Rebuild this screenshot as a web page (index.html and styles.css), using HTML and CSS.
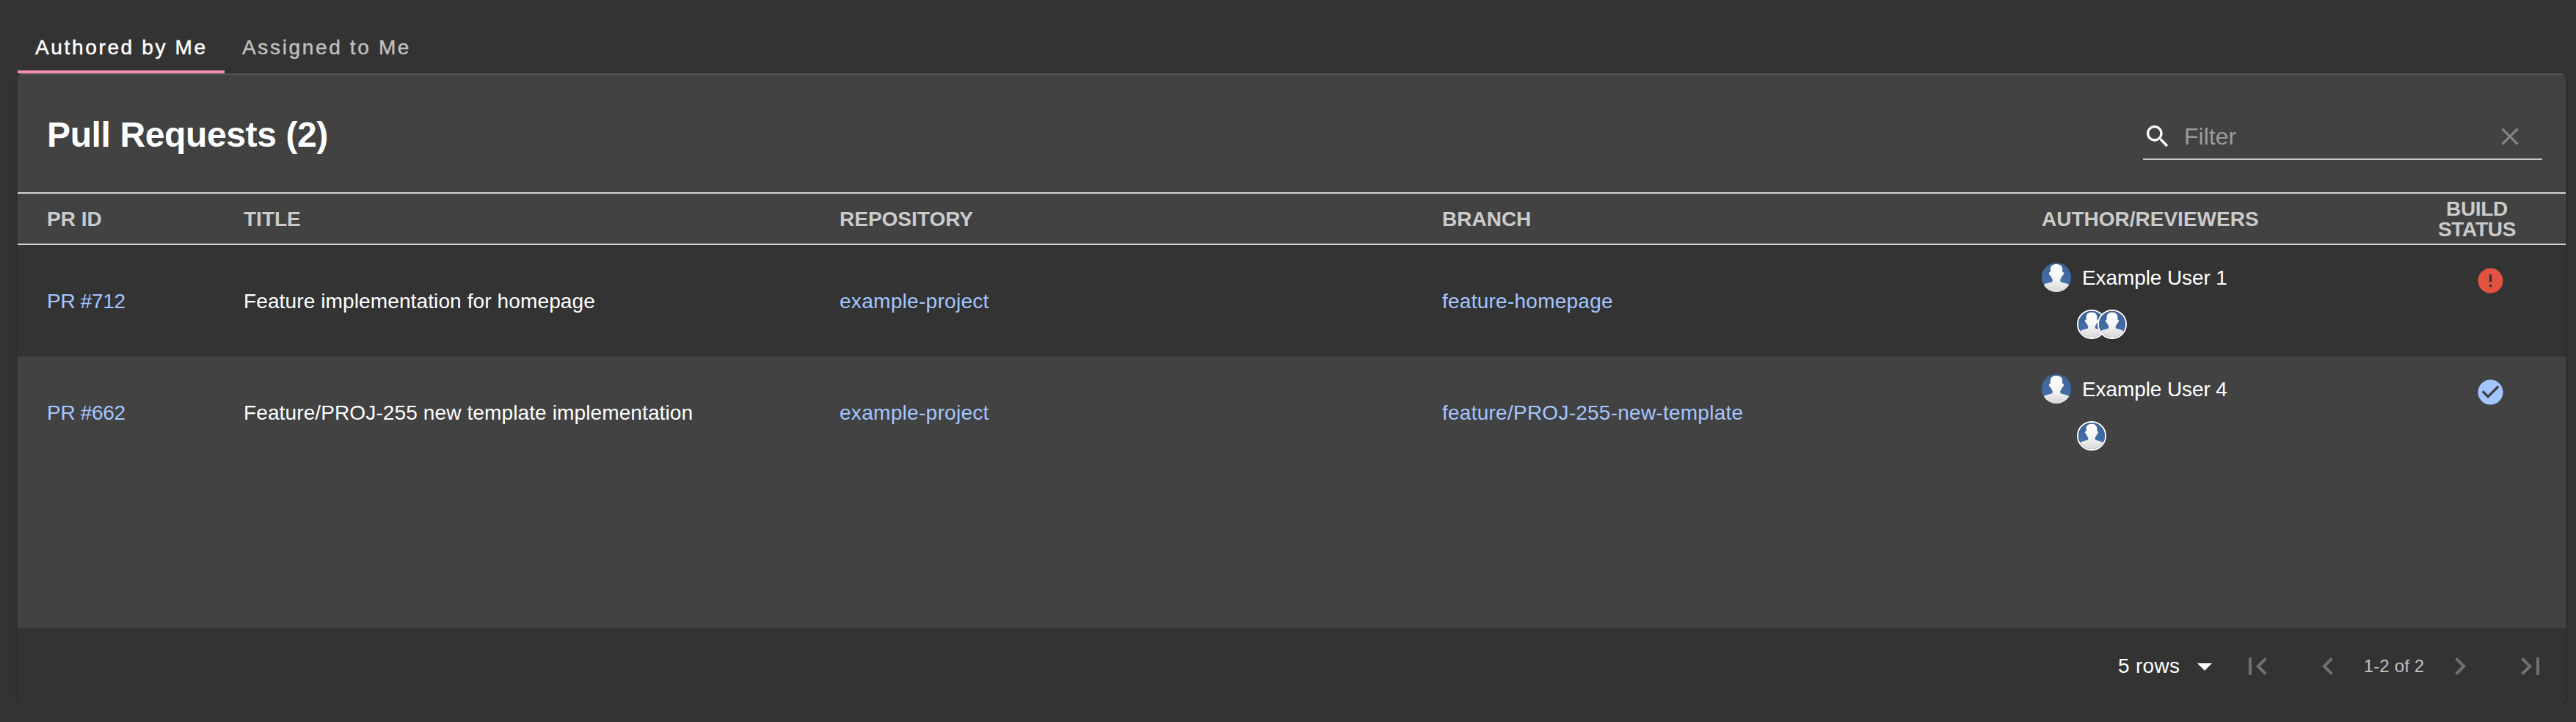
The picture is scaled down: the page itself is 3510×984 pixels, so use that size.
FILE: index.html
```html
<!DOCTYPE html>
<html lang="en">
<head>
<meta charset="utf-8">
<title>Pull Requests</title>
<link rel="stylesheet" href="styles.css">
</head>
<body>
<svg class="defs" width="0" height="0" aria-hidden="true">
  <defs>
    <linearGradient id="sky" x1="0" y1="0" x2="0" y2="1"><stop offset="0" stop-color="#3b6396"/><stop offset="1" stop-color="#4873ae"/></linearGradient>
    <linearGradient id="skin" x1="0" y1="0" x2="0" y2="1"><stop offset="0" stop-color="#ffffff"/><stop offset=".5" stop-color="#f6f6f6"/><stop offset="1" stop-color="#d8d8d8"/></linearGradient>
    <symbol id="person" viewBox="0 0 40 40">
      <rect width="40" height="40" fill="url(#sky)"/>
      <path fill="url(#skin)" d="M20 2c-5.500 0-8.200 3-8.200 7v4c-1.600-.2-2.200.8-1.800 2 .5 1.600 1 2.900 2.300 3.100.5 1.800 1.400 3.200 2.300 4.500.4 1.500.2 2.800-.6 3.700-2.800 1-7.600 1.500-11 3.700L0 40h40l-3-10c-3.400-2.200-8.200-2.700-11-3.700-.8-.9-1-2.200-.6-3.700.9-1.300 1.800-2.700 2.300-4.500 1.300-.2 1.800-1.500 2.300-3.100.4-1.200-.2-2.200-1.800-2V9c0-4-2.700-7-8.200-7z"/>
    </symbol>
  </defs>
</svg>
<nav class="tabs">
  <a class="tab tab-active">Authored by Me</a>
  <a class="tab">Assigned to Me</a>
</nav>
<main class="card">
  <header class="toolbar">
    <h1 class="heading">Pull Requests (2)</h1>
    <label class="filter">
      <svg class="icon-40 white" viewBox="0 0 24 24"><path d="M15.500 14h-.79l-.28-.27C15.410 12.590 16 11.110 16 9.500 16 5.910 13.090 3 9.500 3S3 5.910 3 9.500 5.910 16 9.500 16c1.610 0 3.090-.59 4.230-1.570l.27.28v.79l5 4.990L20.490 19l-4.990-5zm-6 0C7.010 14 5 11.990 5 9.500S7.010 5 9.500 5 14 7.010 14 9.500 11.990 14 9.500 14z"/></svg>
      <span class="placeholder">Filter</span>
      <svg class="icon-40 clear" viewBox="0 0 24 24"><path d="M19 6.410L17.590 5 12 10.590 6.410 5 5 6.410 10.590 12 5 17.590 6.410 19 12 13.410 17.590 19 19 17.590 13.410 12z"/></svg>
    </label>
  </header>
  <div class="row head">
    <div class="cell">PR ID</div>
    <div class="cell">TITLE</div>
    <div class="cell">REPOSITORY</div>
    <div class="cell">BRANCH</div>
    <div class="cell">AUTHOR/REVIEWERS</div>
    <div class="build-head">BUILD<br>STATUS</div>
  </div>
  <div class="row">
    <div class="cell link number">PR #712</div>
    <div class="cell title">Feature implementation for homepage</div>
    <div class="cell link repo">example-project</div>
    <div class="cell link branch">feature-homepage</div>
    <div class="people">
      <div class="author"><svg class="avatar"><use href="#person"/></svg><span class="name">Example User 1</span></div>
      <div class="reviewers"><svg class="avatar ring"><use href="#person"/></svg><svg class="avatar ring"><use href="#person"/></svg></div>
    </div>
    <div class="status"><svg class="icon-41 failed" viewBox="0 0 24 24"><path d="M12 2C6.480 2 2 6.480 2 12s4.480 10 10 10 10-4.480 10-10S17.520 2 12 2zm1 15h-2v-2h2v2zm0-4h-2V7h2v6z"/></svg></div>
  </div>
  <div class="row alt">
    <div class="cell link number">PR #662</div>
    <div class="cell title">Feature/PROJ-255 new template implementation</div>
    <div class="cell link repo">example-project</div>
    <div class="cell link branch">feature/PROJ-255-new-template</div>
    <div class="people">
      <div class="author"><svg class="avatar"><use href="#person"/></svg><span class="name">Example User 4</span></div>
      <div class="reviewers"><svg class="avatar ring"><use href="#person"/></svg></div>
    </div>
    <div class="status"><svg class="icon-41 passed" viewBox="0 0 24 24"><path d="M12 2C6.480 2 2 6.480 2 12s4.480 10 10 10 10-4.480 10-10S17.520 2 12 2zm-2 15l-5-5 1.410-1.410L10 14.170l7.590-7.590L19 8l-9 9z"/></svg></div>
  </div>
  <div class="blank"></div>
  <footer class="pager">
    <span class="rows">5 rows</span>
    <svg class="icon-48 white caret" viewBox="0 0 24 24"><path d="M7 10l5 5 5-5z"/></svg>
    <svg class="icon-48 first" viewBox="0 0 24 24"><path d="M18.410 16.590L13.820 12l4.590-4.590L17 6l-6 6 6 6zM6 6h2v12H6z"/></svg>
    <svg class="icon-48" viewBox="0 0 24 24"><path d="M15.410 7.410L14 6l-6 6 6 6 1.410-1.410L10.830 12z"/></svg>
    <span class="range">1-2 of 2</span>
    <svg class="icon-48" viewBox="0 0 24 24"><path d="M10 6L8.590 7.410 13.170 12l-4.580 4.590L10 18l6-6z"/></svg>
    <svg class="icon-48 last" viewBox="0 0 24 24"><path d="M5.590 7.410L10.180 12l-4.590 4.590L7 18l6-6-6-6zM16 6h2v12h-2z"/></svg>
  </footer>
</main>
</body>
</html>
```
FILE: styles.css
```css
* { box-sizing: border-box; }
body { margin: 0; background: #333; color: #fff; font: 28px/32px "Liberation Sans", Arial, sans-serif; padding: 28px 14px 0 24px; }
.defs { position: absolute; }
svg { display: block; fill: #707070; flex: none; }

.tabs { display: flex; height: 72px; }
.tab { padding: 21px 24px 0; color: #bfbfbf; border-bottom: 4px solid transparent; -webkit-text-stroke: .5px; letter-spacing: 2.65px; white-space: nowrap; }
.tab-active { color: #fff; border-bottom-color: #f48fb1; width: 282px; }

.card { width: 3472px; height: 860px; border-radius: 8px; background: #424242; display: flex; flex-direction: column; overflow: hidden; box-shadow: 0 4px 2px -2px rgba(0,0,0,.3), 0 2px 2px rgba(0,0,0,.14), 0 2px 6px rgba(0,0,0,.12); }
.toolbar { height: 162px; border-top: 2px solid #535353; display: flex; justify-content: space-between; padding: 0 32px 0 40px; }
.heading { margin: 54px 0 0; font-size: 48px; line-height: 56px; letter-spacing: -.38px; }
.filter { width: 544px; height: 76px; margin-top: 40px; border-bottom: 2px solid #c6c6c6; display: flex; align-items: center; padding-top: 14px; }
.placeholder { font-size: 32px; color: #9b9b9b; flex: 1; margin-left: 16px; }
.clear { margin-right: 24px; fill: #828282; }
.white { fill: #fff; }
.icon-40 { width: 40px; height: 40px; }
.icon-41 { width: 41px; height: 41px; }
.icon-48 { width: 48px; height: 48px; }

.row { display: grid; grid-template-columns: 268px 812px 821px 817px 553px 201px; height: 152px; background: #333; align-items: center; flex: none; }
.alt { background: #424242; }
.head { height: 72px; background: #424242; border: solid #d5d5d5; border-width: 2px 0; color: #cbcbcb; font-weight: 700; }
.cell { padding: 2px 0 0 40px; white-space: nowrap; }
.link { color: #a4c6ff; }
.number { letter-spacing: -.3px; }
.title { letter-spacing: .12px; }
.repo { letter-spacing: .3px; }
.branch { letter-spacing: .25px; }
.build-head { line-height: 28px; text-align: center; padding: 2px 41px 0 0; letter-spacing: -.3px; }
.people { padding-left: 40px; align-self: start; padding-top: 24px; }
.author { display: flex; align-items: center; gap: 15px; height: 40px; letter-spacing: -.1px; }
.name { padding-top: 2px; }
.avatar { width: 40px; height: 40px; border-radius: 50%; }
.reviewers { display: flex; padding: 24px 0 0 48px; }
.ring { border: 2px solid #fff; }
.ring + .ring { margin-left: -12px; }
.status { align-self: start; padding: 27.5px 0 0 77.5px; }
.failed { fill: #e15241; }
.passed { fill: #a4c6ff; }
.blank { flex: 1; }

.pager { height: 104px; background: #333; display: flex; align-items: center; padding-right: 24px; justify-content: flex-end; }
.rows { width: 94px; letter-spacing: .3px; }
.caret { margin-right: 24px; }
.first { margin-right: 48px; }
.last { margin-left: 48px; }
.range { font-size: 24px; color: #c1c1c1; width: 132px; text-align: center; letter-spacing: .14px; }
```
